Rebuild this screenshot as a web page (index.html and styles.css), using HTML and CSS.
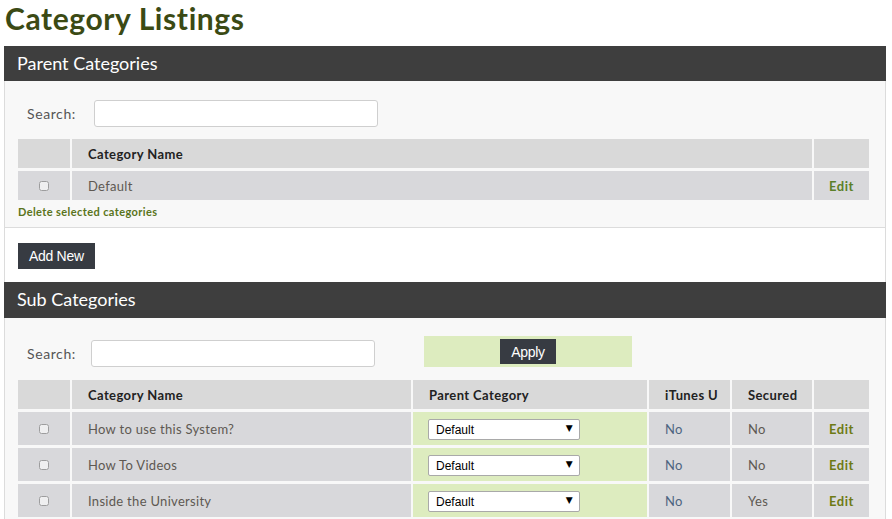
FILE: index.html
```html
<!DOCTYPE html>
<html lang="en">
<head>
    <meta charset="UTF-8">
    <meta name="viewport" content="width=device-width, initial-scale=1.0">
    <title>Category Listings</title>
    <link rel="stylesheet" href="styles.css">
</head>
<body>
    <h1 class="page-title">Category Listings</h1>

    <div class="wrap">
        <!-- Parent categories -->
        <div class="panel">
            <h2 class="panel-title">Parent Categories</h2>
            <div class="panel-body">
                <div class="search-row">
                    <label class="search-label">Search:</label>
                    <input type="text" class="search-input">
                </div>
                <table class="grid">
                    <thead>
                        <tr>
                            <th class="col-check"></th>
                            <th class="col-name-wide">Category Name</th>
                            <th class="col-edit"></th>
                        </tr>
                    </thead>
                    <tbody>
                        <tr>
                            <td class="col-check"><input type="checkbox" class="check"></td>
                            <td>Default</td>
                            <td class="col-edit"><a href="#" class="edit-link">Edit</a></td>
                        </tr>
                    </tbody>
                </table>
                <a href="#" class="delete-link">Delete selected categories</a>
            </div>
            <div class="panel-actions">
                <button class="btn">Add New</button>
            </div>
        </div>

        <!-- Sub categories -->
        <div class="panel">
            <h2 class="panel-title panel-title-sub">Sub Categories</h2>
            <div class="panel-body sub-body">
                <div class="toolbar">
                    <div class="search-row sub-search">
                        <label class="search-label">Search:</label>
                        <input type="text" class="search-input">
                    </div>
                    <div class="apply-box">
                        <button class="btn">Apply</button>
                    </div>
                </div>
                <table class="grid grid-sub">
                    <thead>
                        <tr>
                            <th class="col-check"></th>
                            <th class="col-name">Category Name</th>
                            <th class="col-parent">Parent Category</th>
                            <th class="col-itunes">iTunes U</th>
                            <th class="col-secured">Secured</th>
                            <th class="col-edit"></th>
                        </tr>
                    </thead>
                    <tbody>
                        <tr>
                            <td class="col-check"><input type="checkbox" class="check"></td>
                            <td>How to use this System?</td>
                            <td class="cell-parent"><span class="select-wrap"><select class="parent-select"><option>Default</option></select></span></td>
                            <td class="cell-itunes">No</td>
                            <td>No</td>
                            <td class="col-edit"><a href="#" class="edit-link olive">Edit</a></td>
                        </tr>
                        <tr>
                            <td class="col-check"><input type="checkbox" class="check"></td>
                            <td>How To Videos</td>
                            <td class="cell-parent"><span class="select-wrap"><select class="parent-select"><option>Default</option></select></span></td>
                            <td class="cell-itunes">No</td>
                            <td>No</td>
                            <td class="col-edit"><a href="#" class="edit-link olive">Edit</a></td>
                        </tr>
                        <tr>
                            <td class="col-check"><input type="checkbox" class="check"></td>
                            <td>Inside the University</td>
                            <td class="cell-parent"><span class="select-wrap"><select class="parent-select"><option>Default</option></select></span></td>
                            <td class="cell-itunes">No</td>
                            <td>Yes</td>
                            <td class="col-edit"><a href="#" class="edit-link olive">Edit</a></td>
                        </tr>
                    </tbody>
                </table>
            </div>
        </div>
    </div>
</body>
</html>
```

FILE: styles.css
```css
body {
    font-family: Lato, "Open Sans", sans-serif;
    font-size: 13px;
    color: #5e5852;
    margin: 0;
    padding: 0;
    background-color: #ffffff;
}
.page-title {
    margin: 0;
    padding-left: 5px;
    height: 46px;
    line-height: 36px;
    font-size: 30px;
    font-weight: 700;
    letter-spacing: 0.6px;
    color: #3b4a14;
}
.wrap {
    margin: 0 4px;
    width: 882px;
}
.panel-title {
    margin: 0;
    height: 35px;
    line-height: 35px;
    padding-left: 13px;
    background-color: #3e3e3e;
    color: #ffffff;
    font-size: 18px;
    font-weight: 400;
}
.panel-title-sub {
    height: 36px;
}
.panel-body {
    background-color: #f8f8f8;
    border-left: 1px solid #dcdcdc;
    border-right: 1px solid #dcdcdc;
    border-bottom: 1px solid #dcdcdc;
    padding: 19px 0 7px 0;
}
.search-row {
    display: flex;
    align-items: center;
    padding-left: 22px;
}
.search-label {
    font-size: 14px;
    color: #555;
    width: 67px;
    letter-spacing: 0.6px;
}
.search-input {
    width: 284px;
    height: 27px;
    box-sizing: border-box;
    border: 1px solid #cfcfcf;
    border-radius: 3px;
    background-color: #fff;
}
.grid {
    border-collapse: separate;
    border-spacing: 2px 3px;
    width: 855px;
    margin: 9px 0 0 11px;
    table-layout: fixed;
}
.grid th {
    background-color: #d9d9d9;
    height: 29px;
    padding: 0 0 0 16px;
    text-align: left;
    font-weight: 700;
    font-size: 13px;
    color: #222;
    letter-spacing: 0.4px;
}
.grid td {
    background-color: #d8d8db;
    height: 29px;
    padding: 0 0 0 16px;
    letter-spacing: 0.3px;
}
.grid .col-check {
    width: 52px;
    padding: 0;
    text-align: center;
}
.grid .col-edit {
    width: 55px;
    padding: 0;
    text-align: center;
}
.check {
    width: 10px;
    height: 10px;
    margin: 0;
    opacity: 0.6;
}
.edit-link {
    color: #5b7f28;
    font-weight: 700;
    text-decoration: none;
    letter-spacing: 0.5px;
}
.edit-link.olive {
    color: #6e7a14;
}
.delete-link {
    display: block;
    margin: 1px 0 0 13px;
    font-size: 11px;
    font-weight: 700;
    color: #5a7420;
    text-decoration: none;
    letter-spacing: 0.4px;
    line-height: 16px;
}
.panel-actions {
    border-left: 1px solid #dcdcdc;
    border-right: 1px solid #dcdcdc;
    padding: 15px 0 13px 13px;
}
.btn {
    font-family: "Liberation Sans", Arial, sans-serif;
    font-size: 14px;
    color: #fff;
    background-color: #373b42;
    border: none;
    height: 26px;
    padding: 0 11px;
    letter-spacing: -0.3px;
}
.sub-body {
    padding: 18px 0 0 0;
    border-bottom: none;
}
.toolbar {
    display: flex;
    align-items: flex-end;
}
.sub-search .search-label {
    width: 64px;
}
.apply-box {
    margin-left: 49px;
    width: 208px;
    height: 31px;
    background-color: #ddecbf;
    display: flex;
    justify-content: center;
    align-items: flex-start;
    padding-top: 3px;
    box-sizing: border-box;
}
.apply-box .btn {
    height: 25px;
    padding: 0 11px;
}
.grid-sub {
    margin-top: 10px;
}
.grid-sub td {
    height: 33px;
}
.grid-sub .col-name {
    width: 323px;
}
.grid-sub .col-parent {
    width: 218px;
}
.grid-sub .col-itunes {
    width: 65px;
}
.grid-sub .col-secured {
    width: 64px;
}
.grid-sub .cell-parent {
    background-color: #ddecbf;
    padding-left: 15px;
}
.grid-sub .cell-itunes {
    color: #4d6480;
}
.select-wrap {
    position: relative;
    display: inline-block;
    vertical-align: middle;
    margin-top: 2px;
}
/* solid arrow drawn over the select */
.select-wrap::after {
    content: "\25BC";
    position: absolute;
    right: 7px;
    top: 4px;
    font-family: "DejaVu Sans", sans-serif;
    font-size: 9px;
    color: #000;
    pointer-events: none;
}
.parent-select {
    -webkit-appearance: none;
    appearance: none;
    display: block;
    width: 152px;
    height: 21px;
    padding: 0 0 0 7px;
    font-family: "Liberation Sans", Arial, sans-serif;
    font-size: 12px;
    color: #000;
    background-color: #fff;
    border: 1px solid #a9a9a9;
    border-radius: 2px;
}
```
